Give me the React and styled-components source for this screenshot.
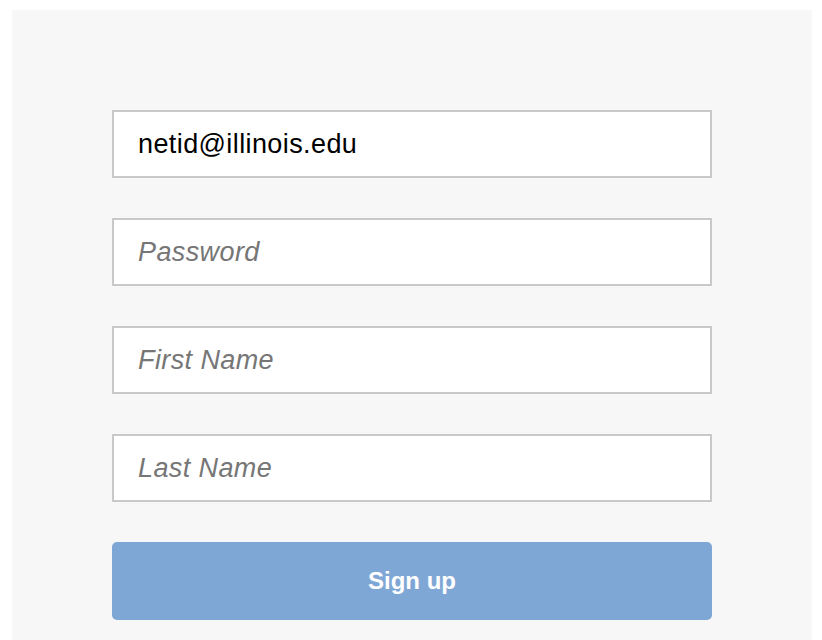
import React from 'react';
import styled, { createGlobalStyle } from 'styled-components';

const GlobalStyle = createGlobalStyle`
    html, body {
        margin: 0;
        padding: 0;
        background: #ffffff;
        font-family: "Liberation Sans", Arial, sans-serif;
    }
`;

const Panel = styled.section`
    box-sizing: border-box;
    width: 800px;
    min-height: 630px;
    margin: 10px 0 0 12px;
    padding: 100px 100px 40px;
    background: #f7f7f7;
`;

const Form = styled.form`
    display: flex;
    flex-direction: column;
    gap: 40px;
`;

const Field = styled.input`
    box-sizing: border-box;
    width: 600px;
    height: 68px;
    margin: 0;
    padding: 0 24px;
    border: 2px solid #c9c9c9;
    border-radius: 0;
    background: #ffffff;
    color: #000000;
    font-family: "Liberation Sans", Arial, sans-serif;
    font-size: 27px;
    letter-spacing: 0.4px;
    outline: none;

    &::placeholder {
        color: #767676;
        font-style: italic;
        opacity: 1;
    }
`;

const Submit = styled.button`
    box-sizing: border-box;
    width: 600px;
    height: 78px;
    border: none;
    border-radius: 5px;
    background: #7fa7d6;
    color: #ffffff;
    font-family: "Liberation Sans", Arial, sans-serif;
    font-size: 24px;
    font-weight: bold;
    cursor: pointer;
`;

const fields = [
    { type: 'email', placeholder: 'Email', value: 'netid@illinois.edu' },
    { type: 'password', placeholder: 'Password' },
    { type: 'text', placeholder: 'First Name' },
    { type: 'text', placeholder: 'Last Name' },
];

const App = () => (
    <>
        <GlobalStyle />
        <Panel>
            <Form onSubmit={e => e.preventDefault()}>
                {fields.map(f => (
                    <Field
                        key={f.placeholder}
                        type={f.type}
                        placeholder={f.placeholder}
                        defaultValue={f.value}
                    />
                ))}
                <Submit type="submit">Sign up</Submit>
            </Form>
        </Panel>
    </>
);

export default App;
